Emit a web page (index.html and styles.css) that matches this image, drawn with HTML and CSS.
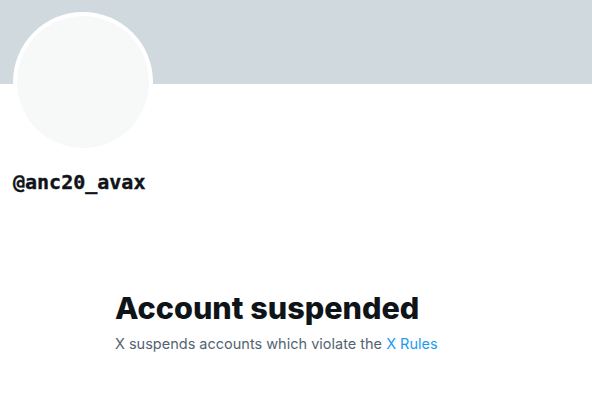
FILE: index.html
```html
<!DOCTYPE html>
<html>
<head>
<meta charset="utf-8">
<link rel="stylesheet" href="styles.css">
</head>
<body>
<div class="profile">
  <div class="banner"></div>
  <div class="avatar"><div class="avatar-inner"></div></div>
  <div class="handle">@anc20_avax</div>
  <div class="suspended">
    <h1 class="title">Account suspended</h1>
    <p class="desc">X suspends accounts which violate the <a class="link" href="#">X Rules</a></p>
  </div>
</div>
</body>
</html>
```
FILE: styles.css
```css
html, body {
  margin: 0;
  padding: 0;
  background: #ffffff;
}
.profile {
  width: 592px;
  display: flex;
  flex-direction: column;
}
.banner {
  height: 84px;
  background: #cfd9de;
}
.avatar {
  width: 140px;
  height: 140px;
  margin-top: -72px;
  margin-left: 13px;
  border-radius: 50%;
  background: #ffffff;
  padding: 4px;
  box-sizing: border-box;
}
.avatar-inner {
  width: 100%;
  height: 100%;
  border-radius: 50%;
  background: #f7f9f9;
}
.handle {
  margin-top: 18px;
  margin-left: 13px;
  font-family: "DejaVu Sans Mono", monospace;
  font-weight: bold;
  font-size: 20px;
  line-height: 24px;
  color: #0f1419;
  -webkit-text-stroke: 0.4px #0f1419;
}
.suspended {
  margin-top: 96px;
  padding-left: 115px;
}
.title {
  margin: 0;
  font-family: Inter, "Noto Sans", sans-serif;
  font-weight: 800;
  font-size: 30.6px;
  line-height: 36px;
  color: #0f1419;
}
.desc {
  margin: 8px 0 0;
  font-family: Inter, "Noto Sans", sans-serif;
  font-size: 14.5px;
  line-height: 20px;
  color: #536471;
}
.link {
  color: #1d9bf0;
  text-decoration: none;
}
```
